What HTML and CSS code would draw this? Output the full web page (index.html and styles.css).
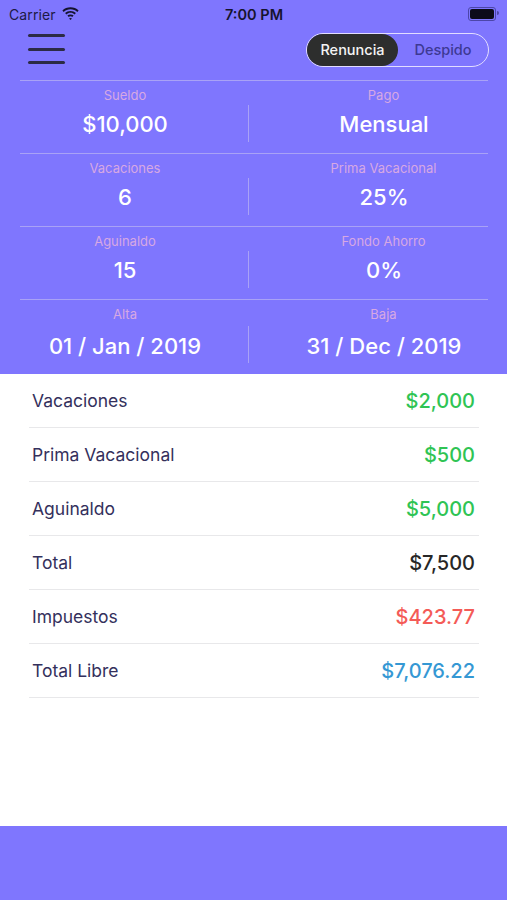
FILE: index.html
```html
<!DOCTYPE html>
<html lang="es">
<head>
    <meta charset="UTF-8">
    <meta name="viewport" content="width=device-width, initial-scale=1.0">
    <title>Finiquito</title>
    <link rel="stylesheet" href="styles.css">
</head>
<body>
    <div class="statusbar">
        <div class="carrier">
            Carrier
            <svg class="wifi" width="17" height="13" viewBox="0 0 17 13">
                <path d="M8.5 2.2c2.6 0 5 1 6.8 2.7l1.3-1.4C14.5 1.5 11.6.3 8.5.3S2.5 1.5.4 3.5l1.3 1.4C3.5 3.2 5.9 2.2 8.5 2.2z"/>
                <path d="M8.5 5.8c1.6 0 3 .6 4.1 1.6l1.3-1.4C12.5 4.7 10.6 3.9 8.5 3.9S4.5 4.7 3.1 6l1.3 1.4c1.1-1 2.5-1.6 4.1-1.6z"/>
                <path d="M8.5 9.3c.7 0 1.3.3 1.8.7l1.3-1.4c-.8-.8-1.9-1.2-3.1-1.2s-2.3.4-3.1 1.2L6.7 10c.5-.4 1.1-.7 1.8-.7z"/>
                <path d="M8.5 13l1.5-1.6c-.4-.3-.9-.5-1.5-.5s-1.1.2-1.5.5z"/>
            </svg>
        </div>
        <div class="time">7:00 PM</div>
        <div class="battery"><span class="battery-fill"></span></div>
    </div>

    <div class="toolbar">
        <div class="menu-button">
            <span></span>
            <span></span>
            <span></span>
        </div>
        <div class="segment">
            <div class="segment-item active">Renuncia</div>
            <div class="segment-item">Despido</div>
        </div>
    </div>

    <div class="stats">
        <div class="stat-row">
            <div class="stat">
                <div class="stat-label">Sueldo</div>
                <div class="stat-value">$10,000</div>
            </div>
            <div class="stat">
                <div class="stat-label">Pago</div>
                <div class="stat-value">Mensual</div>
            </div>
        </div>
        <div class="stat-row">
            <div class="stat">
                <div class="stat-label">Vacaciones</div>
                <div class="stat-value">6</div>
            </div>
            <div class="stat">
                <div class="stat-label">Prima Vacacional</div>
                <div class="stat-value">25%</div>
            </div>
        </div>
        <div class="stat-row">
            <div class="stat">
                <div class="stat-label">Aguinaldo</div>
                <div class="stat-value">15</div>
            </div>
            <div class="stat">
                <div class="stat-label">Fondo Ahorro</div>
                <div class="stat-value">0%</div>
            </div>
        </div>
        <div class="stat-row last">
            <div class="stat">
                <div class="stat-label">Alta</div>
                <div class="stat-value">01 / Jan / 2019</div>
            </div>
            <div class="stat">
                <div class="stat-label">Baja</div>
                <div class="stat-value">31 / Dec / 2019</div>
            </div>
        </div>
    </div>

    <div class="results">
        <div class="result-row">
            <span class="result-label">Vacaciones</span>
            <span class="result-value green">$2,000</span>
        </div>
        <div class="result-row">
            <span class="result-label">Prima Vacacional</span>
            <span class="result-value green">$500</span>
        </div>
        <div class="result-row">
            <span class="result-label">Aguinaldo</span>
            <span class="result-value green">$5,000</span>
        </div>
        <div class="result-row">
            <span class="result-label">Total</span>
            <span class="result-value dark">$7,500</span>
        </div>
        <div class="result-row">
            <span class="result-label">Impuestos</span>
            <span class="result-value red">$423.77</span>
        </div>
        <div class="result-row">
            <span class="result-label">Total Libre</span>
            <span class="result-value blue">$7,076.22</span>
        </div>
    </div>

    <div class="bottom-bar"></div>
</body>
</html>
```

FILE: styles.css
```css
body {
    margin: 0;
    height: 900px;
    display: flex;
    flex-direction: column;
    font-family: Inter, "Open Sans", Arial, sans-serif;
    background-color: #7f76fe;
    overflow: hidden;
}

/* status bar */
.statusbar {
    height: 28px;
    display: grid;
    grid-template-columns: 1fr auto 1fr;
    align-items: center;
    padding: 0 8px 0 9px;
    color: #1d1a45;
    font-size: 14px;
}
.carrier {
    display: flex;
    align-items: center;
    gap: 6px;
    letter-spacing: 0.1px;
}
.wifi {
    fill: #15132e;
    margin-top: -2px;
}
.time {
    font-weight: 600;
    font-size: 14.5px;
    color: #15132e;
}
.battery {
    justify-self: end;
    position: relative;
    width: 24px;
    height: 10px;
    border: 1px solid #4c46a8;
    border-radius: 3px;
    padding: 1px;
    margin-right: 3px;
}
.battery::after {
    content: "";
    position: absolute;
    right: -4px;
    top: 3px;
    width: 2px;
    height: 4px;
    border-radius: 0 2px 2px 0;
    background-color: #4c46a8;
}
.battery-fill {
    display: block;
    height: 100%;
    border-radius: 2px;
    background-color: #0c0b1a;
}

/* toolbar */
.toolbar {
    height: 42px;
    display: flex;
    align-items: center;
    justify-content: space-between;
    padding: 0 18px 10px 28px;
}
.menu-button {
    width: 37px;
    display: flex;
    flex-direction: column;
    gap: 10.5px;
}
.menu-button span {
    height: 3px;
    border-radius: 2px;
    background-color: #2c2b45;
}
.segment {
    display: flex;
    width: 181px;
    height: 32px;
    padding: 0;
    border: 1.5px solid #e2ddff;
    border-radius: 18px;
    font-size: 14.5px;
    font-weight: 500;
    margin-top: 1px;
}
.segment-item {
    flex: 1;
    display: flex;
    align-items: center;
    justify-content: center;
    color: #3d3993;
    border-radius: 16px;
}
.segment-item.active {
    flex: 0 0 91px;
    background-color: #2d2e2d;
    color: #f4f4f4;
}

/* stats grid */
.stats {
    margin: 0 19px 0 20px;
}
.stat-row {
    display: grid;
    grid-template-columns: 228px 1fr;
    height: 72px;
    border-top: 1px solid #a9a2f6;
}
.stat-row.last {
    height: 74px;
}
.stat {
    text-align: center;
    padding-right: 18px;
}
.stat + .stat {
    padding-right: 0;
    padding-left: 0;
}
.stat-label {
    padding-top: 6px;
    line-height: 16px;
    font-size: 13px;
    color: #d7a8e4;
}
.stat-value {
    height: 37px;
    margin-top: 2px;
    display: flex;
    align-items: center;
    justify-content: center;
    color: #ffffff;
    font-size: 22px;
    font-weight: 500;
}
.last .stat-value {
    margin-top: 4px;
    padding-top: 3px;
    height: 34px;
}
.stat + .stat .stat-label {
    padding-left: 31px;
}
.stat + .stat .stat-value {
    border-left: 1px solid #a9a2f6;
    padding-left: 31px;
}

/* results list */
.results {
    flex: 1;
    background-color: #ffffff;
    padding: 0 28px 0 29px;
}
.result-row {
    height: 53px;
    display: flex;
    align-items: center;
    justify-content: space-between;
    padding: 0 4px 0 3px;
    border-bottom: 1px solid #e8e8ea;
}
.result-label {
    font-size: 17.5px;
    color: #34305c;
}
.result-value {
    font-size: 20px;
    font-weight: 500;
}
.green {
    color: #2fc454;
}
.dark {
    color: #272727;
}
.red {
    color: #f45b57;
}
.blue {
    color: #3598d4;
}

.bottom-bar {
    height: 74px;
    background-color: #7f76fe;
}
```
